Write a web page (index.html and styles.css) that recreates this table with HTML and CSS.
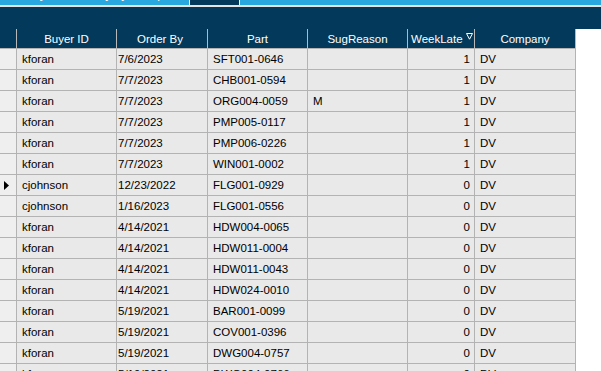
FILE: index.html
```html
<!DOCTYPE html>
<html>
<head>
<meta charset="utf-8">
<link rel="stylesheet" href="styles.css">
</head>
<body>
<div class="tabs">
  <div class="tab tab-a"><span class="tab-label">Buyer Summary by Group</span></div>
  <div class="tab tab-active"></div>
  <div class="tab tab-rest"></div>
</div>
<div class="strip"></div>
<div class="toolbar"></div>
<div class="grid">
  <div class="row head">
    <div class="c c0"></div>
    <div class="c c1">Buyer ID</div>
    <div class="c c2">Order By</div>
    <div class="c c3">Part</div>
    <div class="c c4">SugReason</div>
    <div class="c c5 sorted">WeekLate<svg class="sort" width="7" height="7" viewBox="0 0 7 7"><path d="M0.5 0.5 H6.5 L3.5 6.2 Z" fill="none" stroke="#fff" stroke-width="1"/></svg></div>
    <div class="c c6">Company</div>
  </div>
  <div class="row"><div class="c c0"></div><div class="c c1">kforan</div><div class="c c2">7/6/2023</div><div class="c c3">SFT001-0646</div><div class="c c4"></div><div class="c c5">1</div><div class="c c6">DV</div></div>
  <div class="row"><div class="c c0"></div><div class="c c1">kforan</div><div class="c c2">7/7/2023</div><div class="c c3">CHB001-0594</div><div class="c c4"></div><div class="c c5">1</div><div class="c c6">DV</div></div>
  <div class="row"><div class="c c0"></div><div class="c c1">kforan</div><div class="c c2">7/7/2023</div><div class="c c3">ORG004-0059</div><div class="c c4">M</div><div class="c c5">1</div><div class="c c6">DV</div></div>
  <div class="row"><div class="c c0"></div><div class="c c1">kforan</div><div class="c c2">7/7/2023</div><div class="c c3">PMP005-0117</div><div class="c c4"></div><div class="c c5">1</div><div class="c c6">DV</div></div>
  <div class="row"><div class="c c0"></div><div class="c c1">kforan</div><div class="c c2">7/7/2023</div><div class="c c3">PMP006-0226</div><div class="c c4"></div><div class="c c5">1</div><div class="c c6">DV</div></div>
  <div class="row"><div class="c c0"></div><div class="c c1">kforan</div><div class="c c2">7/7/2023</div><div class="c c3">WIN001-0002</div><div class="c c4"></div><div class="c c5">1</div><div class="c c6">DV</div></div>
  <div class="row"><div class="c c0"><svg class="pointer" width="5" height="9" viewBox="0 0 5 9"><path d="M0 0 L5 4.5 L0 9 Z" fill="#000"/></svg></div><div class="c c1">cjohnson</div><div class="c c2">12/23/2022</div><div class="c c3">FLG001-0929</div><div class="c c4"></div><div class="c c5">0</div><div class="c c6">DV</div></div>
  <div class="row"><div class="c c0"></div><div class="c c1">cjohnson</div><div class="c c2">1/16/2023</div><div class="c c3">FLG001-0556</div><div class="c c4"></div><div class="c c5">0</div><div class="c c6">DV</div></div>
  <div class="row"><div class="c c0"></div><div class="c c1">kforan</div><div class="c c2">4/14/2021</div><div class="c c3">HDW004-0065</div><div class="c c4"></div><div class="c c5">0</div><div class="c c6">DV</div></div>
  <div class="row"><div class="c c0"></div><div class="c c1">kforan</div><div class="c c2">4/14/2021</div><div class="c c3">HDW011-0004</div><div class="c c4"></div><div class="c c5">0</div><div class="c c6">DV</div></div>
  <div class="row"><div class="c c0"></div><div class="c c1">kforan</div><div class="c c2">4/14/2021</div><div class="c c3">HDW011-0043</div><div class="c c4"></div><div class="c c5">0</div><div class="c c6">DV</div></div>
  <div class="row"><div class="c c0"></div><div class="c c1">kforan</div><div class="c c2">4/14/2021</div><div class="c c3">HDW024-0010</div><div class="c c4"></div><div class="c c5">0</div><div class="c c6">DV</div></div>
  <div class="row"><div class="c c0"></div><div class="c c1">kforan</div><div class="c c2">5/19/2021</div><div class="c c3">BAR001-0099</div><div class="c c4"></div><div class="c c5">0</div><div class="c c6">DV</div></div>
  <div class="row"><div class="c c0"></div><div class="c c1">kforan</div><div class="c c2">5/19/2021</div><div class="c c3">COV001-0396</div><div class="c c4"></div><div class="c c5">0</div><div class="c c6">DV</div></div>
  <div class="row"><div class="c c0"></div><div class="c c1">kforan</div><div class="c c2">5/19/2021</div><div class="c c3">DWG004-0757</div><div class="c c4"></div><div class="c c5">0</div><div class="c c6">DV</div></div>
  <div class="row"><div class="c c0"></div><div class="c c1">kforan</div><div class="c c2">5/19/2021</div><div class="c c3">DWG004-0766</div><div class="c c4"></div><div class="c c5">0</div><div class="c c6">DV</div></div>
</div>
</body>
</html>
```

FILE: styles.css
```css
html, body {
  margin: 0;
  padding: 0;
  background: #ffffff;
  overflow: hidden;
  height: 371px;
}
body {
  font-family: "Liberation Sans", Arial, sans-serif;
  font-size: 11.5px;
  color: #000;
}
.tabs {
  display: flex;
  height: 5px;
  overflow: hidden;
  background: #29a8e0;
}
.tab {
  height: 5px;
  overflow: hidden;
}
.tab-a {
  width: 189px;
  border-right: 1px solid #ffffff;
  display: flex;
  justify-content: center;
  align-items: flex-end;
}
.tab-label {
  color: #ffffff;
  font-size: 12px;
  line-height: 12px;
  margin-bottom: 5px;
  white-space: nowrap;
}
.tab-active {
  width: 49px;
  background: #033a5b;
  border-right: 1px solid #ffffff;
}
.tab-rest {
  flex: 1;
}
.strip {
  height: 2px;
  background: #e4e4e4;
}
.toolbar {
  height: 22px;
  background: #033a5b;
}
.grid {
  width: 576px;
}
.row {
  display: flex;
  height: 21px;
  background: #e9e9e9;
}
.row.head {
  height: 20px;
  background: #033a5b;
  color: #ffffff;
}
.c {
  box-sizing: border-box;
  height: 100%;
  border-right: 1px solid #b3b3b3;
  border-bottom: 1px solid #b3b3b3;
  display: flex;
  align-items: center;
  padding: 0 5px;
  white-space: nowrap;
  overflow: hidden;
}
.head .c {
  justify-content: center;
  border-right-color: #b8b8b8;
  border-bottom-color: #b3b3b3;
}
.c0 { width: 17px; background: #efefef; padding: 0 0 0 4px; }
.head .c0 { background: #033a5b; }
.c1 { width: 100px; }
.c2 { width: 91px; padding-left: 1px; }
.c3 { width: 100px; }
.c4 { width: 100px; }
.c5 { width: 67px; justify-content: flex-end; padding-right: 4px; }
.c6 { width: 101px; }
.head .c5.sorted {
  justify-content: flex-start;
  padding-left: 3px;
  padding-right: 0;
}
.sort {
  flex: none;
  margin-left: 3px;
  margin-top: -4px;
}
.pointer {
  display: block;
}
```
